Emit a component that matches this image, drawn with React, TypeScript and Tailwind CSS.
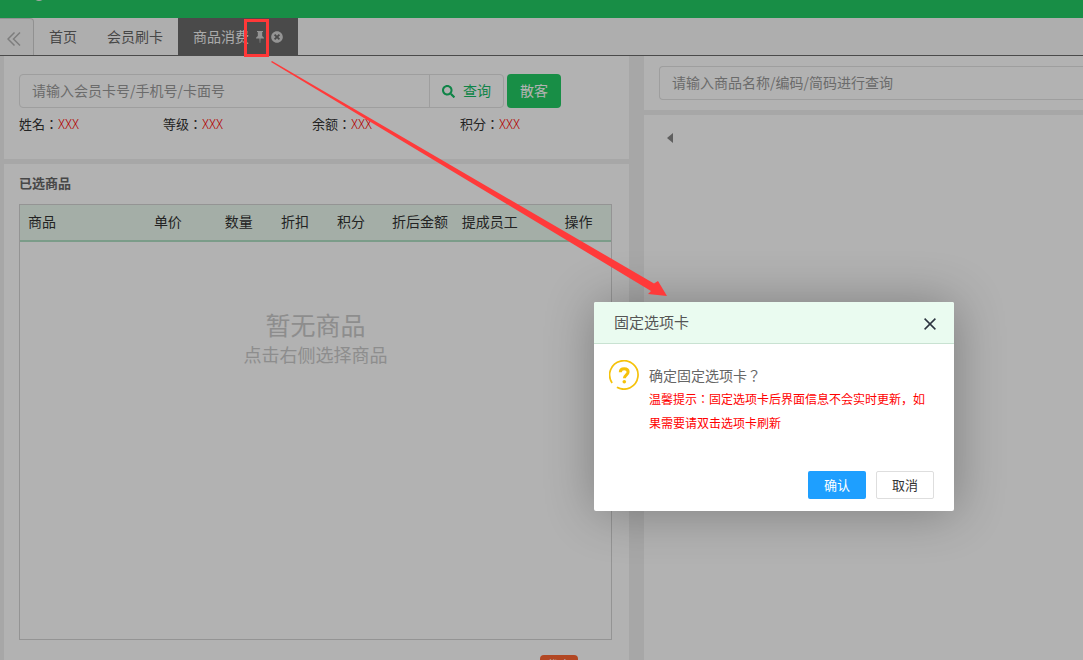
import React from "react";
import { FaSearch, FaTimesCircle } from "react-icons/fa";

const memberFields = [
  { label: "姓名：", value: "XXX" },
  { label: "等级：", value: "XXX" },
  { label: "余额：", value: "XXX" },
  { label: "积分：", value: "XXX" },
];

const columns = [
  { title: "商品", width: "w-[21.3%]" },
  { title: "单价", width: "w-[12%]" },
  { title: "数量", width: "w-[9.5%]" },
  { title: "折扣", width: "w-[9.5%]" },
  { title: "积分", width: "w-[9.3%]" },
  { title: "折后金额", width: "w-[11.8%]" },
  { title: "提成员工", width: "w-[17.4%]" },
  { title: "操作", width: "w-[9.2%]" },
];

function TabBar() {
  return (
    <nav className="flex h-[38px] border-b border-[#6a6a6a] bg-[#fafafa] text-sm text-[#666]">
      <button
        type="button"
        aria-label="收起"
        className="flex w-[34px] items-center rounded-tr-sm border-t border-r border-[#d0d0d0] bg-[#f5f5f5] pt-1 pl-[7px] text-[#b4b4b4]"
      >
        <svg viewBox="0 0 14 14" className="h-3.5 w-3.5" fill="none" stroke="currentColor" strokeWidth="1.5">
          <path d="M7.500 0.500 1 7l6.500 6.500M13 0.500 6.500 7l6.500 6.500" />
        </svg>
      </button>
      <a href="#home" className="flex items-center px-[15px] pb-0.5">首页</a>
      <a href="#card" className="flex items-center px-[15px] pb-0.5">会员刷卡</a>
      <div className="flex items-center bg-[#6a6a6a] pr-[15px] pl-[15px] text-[#f4f4f4]">
        <a href="#consume" className="pb-0.5">商品消费</a>
        <button type="button" aria-label="固定" className="ml-[7px] text-[#d4d4d4]">
          <svg viewBox="0 0 8 12" className="h-3 w-2" fill="currentColor">
            <path d="M1 0h6v1H6.200v4.200C7.300 5.600 8 6.400 8 7.500H4.500L4.200 12h-.4L3.500 7.500H0C0 6.400.7 5.600 1.800 5.200V1H1z" />
          </svg>
        </button>
        <button type="button" aria-label="关闭" className="ml-[7px] text-[#d4d4d4]">
          <FaTimesCircle className="h-3 w-3" />
        </button>
      </div>
    </nav>
  );
}

function MemberPanel() {
  return (
    <section className="h-[103px] bg-white px-[15px] pt-[18px]">
      <div className="flex gap-[3px]">
        <div className="flex h-[34px] w-[485px] rounded-sm border border-[#e2e2e2]">
          <input
            aria-label="会员查询"
            placeholder="请输入会员卡号/手机号/卡面号"
            className="min-w-0 flex-1 px-3 pb-0.5 text-sm outline-none placeholder:text-[#9a9a9a]"
          />
          <button
            type="button"
            className="flex w-[74px] items-center justify-center gap-2 border-l border-[#e2e2e2] text-sm text-[#15bd66]"
          >
            <FaSearch className="h-[13px] w-[13px]" />
            <span className="pb-0.5">查询</span>
          </button>
        </div>
        <button type="button" className="h-[34px] w-[54px] rounded-sm bg-[#23cc65] pb-0.5 text-sm text-white">
          散客
        </button>
      </div>
      <dl className="mt-1.5 grid grid-cols-[144fr_149fr_148fr_154fr] text-[13px] leading-5">
        {memberFields.map((field) => (
          <div key={field.label} className="flex font-['Noto_Sans_CJK_JP',sans-serif]">
            <dt className="text-[#333]">{field.label}</dt>
            <dd className="font-light text-[#ff0000]">{field.value}</dd>
          </div>
        ))}
      </dl>
    </section>
  );
}

function CartPanel() {
  return (
    <section className="flex flex-1 flex-col bg-white pt-[9px] pr-[17px] pl-[15px]">
      <h2 className="text-[13px] leading-5 font-bold text-[#666]">已选商品</h2>
      <div className="mt-[11px] h-[436px] border border-[#d5d5d5]">
        <table className="w-full table-fixed border-b-2 border-[#b0e0c4] bg-[#ebfaf0] text-left text-sm text-[#333]">
          <thead>
            <tr className="h-9">
              {columns.map((column) => (
                <th key={column.title} className={`${column.width} pb-[3px] pl-2 font-normal whitespace-nowrap`}>
                  {column.title}
                </th>
              ))}
            </tr>
          </thead>
        </table>
        <div className="pt-[66px] text-center text-[#cbcbcb]">
          <p className="text-[25px] leading-[32px]">暂无商品</p>
          <p className="text-lg leading-7">点击右侧选择商品</p>
        </div>
      </div>
      <div className="mt-[15px] flex h-[5px] justify-end overflow-hidden pr-[34px]">
        <span className="h-5 w-[38px] rounded-sm bg-[#ff6633] pt-0.5 text-center text-xs text-white">优惠</span>
      </div>
    </section>
  );
}

function ProductPanel() {
  return (
    <div className="flex min-w-0 flex-col gap-[5px] overflow-hidden">
      <section className="bg-white pt-2.5 pb-2.5 pl-[15px]">
        <input
          aria-label="商品查询"
          placeholder="请输入商品名称/编码/简码进行查询"
          className="h-[34px] w-full rounded-l-sm border border-r-0 border-[#e2e2e2] px-3 pb-0.5 text-sm outline-none placeholder:text-[#9a9a9a]"
        />
      </section>
      <section className="flex-1 bg-white pt-[18px] pl-[23px]">
        <button type="button" aria-label="上一页" className="block text-[#888]">
          <svg viewBox="0 0 6 10" className="h-2.5 w-1.5" fill="currentColor">
            <path d="M6 0v10L0 5z" />
          </svg>
        </button>
      </section>
    </div>
  );
}

function ConfirmDialog() {
  return (
    <div
      role="dialog"
      aria-labelledby="dialog-title"
      className="absolute top-[302px] left-[594px] w-[360px] rounded-xs bg-white shadow-[1px_1px_50px_rgba(0,0,0,0.3)]"
    >
      <header className="flex h-[42px] items-center justify-between rounded-t-xs border-b border-[#c9e2d2] bg-[#eafbf0] pr-[18px] pl-5">
        <h1 id="dialog-title" className="text-[15px] text-[#555]">固定选项卡</h1>
        <button type="button" aria-label="关闭" className="pt-0.5 text-[#2d3440]">
          <svg viewBox="0 0 12 12" className="h-3 w-3" fill="none" stroke="currentColor" strokeWidth="1.5">
            <path d="M.6.6l10.800 10.800M11.400.6.6 11.400" />
          </svg>
        </button>
      </header>
      <div className="flex gap-2.5 pt-4 pr-5 pl-[15px]">
        <svg viewBox="0 0 30 30" className="h-[30px] w-[30px] shrink-0" fill="none" stroke="#f5c20b">
          <path d="M3.100 22.900A14.200 14.200 0 1 1 7.900 27.300" strokeWidth="1.700" />
          <path d="M11.300 12.200c0-2.300 1.500-3.400 3.900-3.400s3.900 1.200 3.900 3.100c0 2.800-3.700 3-3.700 6.400" strokeWidth="3" />
          <circle cx="15.300" cy="21.700" r="1.800" fill="#f5c20b" stroke="none" />
        </svg>
        <div className="pt-1 font-['Noto_Sans_CJK_JP',sans-serif]">
          <p className="text-sm leading-[23px] text-[#666]">确定固定选项卡？</p>
          <p className="text-xs leading-6 text-[#ff0000]">
            温馨提示：固定选项卡后界面信息不会实时更新，如果需要请双击选项卡刷新
          </p>
        </div>
      </div>
      <footer className="flex justify-end gap-2.5 px-5 pt-9 pb-3 text-[13px]">
        <button type="button" className="h-7 w-[58px] rounded-xs bg-[#1e9fff] text-white">
          确认
        </button>
        <button type="button" className="h-7 w-[58px] rounded-xs border border-[#dedede] text-[#333]">
          取消
        </button>
      </footer>
    </div>
  );
}

export default function App() {
  return (
    <div className="relative flex min-h-screen flex-col overflow-hidden bg-[#f0f0f0] font-['Noto_Sans_CJK_SC',sans-serif]">
      <header className="h-[18px] overflow-hidden bg-[#23cc65] pl-[33px]">
        <div className="-mt-[11px] h-3 w-3 rounded-full bg-[#eee]" />
      </header>
      <TabBar />
      <main className="grid flex-1 grid-cols-[625fr_439fr] gap-[15px] pl-1">
        <div className="flex min-w-0 flex-col gap-[5px]">
          <MemberPanel />
          <CartPanel />
        </div>
        <ProductPanel />
      </main>
      <div className="absolute inset-0 bg-black/30" />
      <ConfirmDialog />
      <div className="absolute top-[19px] left-[244px] h-[38px] w-[25px] border-[3px] border-[#ff3838]" />
      <svg viewBox="0 0 396 236" className="absolute top-[61px] left-[271px] h-[236px] w-[396px]" fill="#ff3a3a">
        <path d="M1 0 383 222.500l4-2.500 9 15-19-2 3-3L0 1z" />
      </svg>
    </div>
  );
}
